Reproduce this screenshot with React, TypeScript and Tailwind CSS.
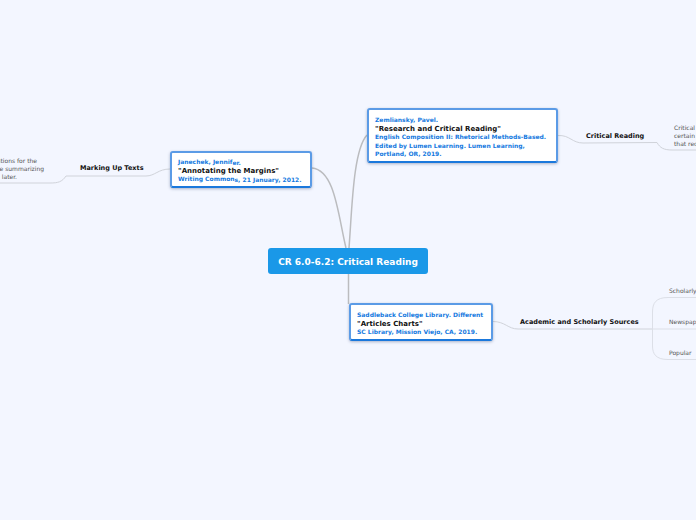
import React from 'react';

const font = { fontFamily: '"DejaVu Sans", sans-serif' };

const Blue: React.FC<{ children: React.ReactNode }> = ({ children }) => (
  <div className="text-[6px] font-bold leading-[8.500px] text-[#1479e0]">{children}</div>
);

const Title: React.FC<{ children: React.ReactNode }> = ({ children }) => (
  <div className="text-[7px] font-bold leading-[8.500px] text-[#111]">{children}</div>
);

const Cite: React.FC<{ className: string; children: React.ReactNode }> = ({ className, children }) => (
  <div className={`absolute flex flex-col whitespace-nowrap rounded-[3px] border-2 border-[#5b9be6] border-b-[#1a78dc] bg-white shadow-[0_1px_3px_rgba(60,80,120,0.4)] ${className}`}>
    {children}
  </div>
);

const Topic: React.FC<{ className: string; children: React.ReactNode }> = ({ className, children }) => (
  <div className={`absolute whitespace-nowrap text-[6.500px] font-bold leading-[9px] text-[#111] ${className}`}>{children}</div>
);

const Leaf: React.FC<{ className: string; children: React.ReactNode }> = ({ className, children }) => (
  <div className={`absolute whitespace-nowrap text-[6px] leading-[8px] text-[#555] ${className}`}>{children}</div>
);

export default function App() {
  return (
    <div className="relative h-[520px] w-[696px] overflow-hidden bg-[#f3f6ff]" style={font}>
      {/* connectors */}
      <svg className="absolute left-0 top-0" width="696" height="520" fill="none">
        <g stroke="#bbbcbf" strokeWidth="1.5">
          <path d="M346 248 C 338 215, 335 170, 312 168" />
          <path d="M349 248 C 352 210, 353 150, 367 135" />
          <path d="M348.500 274 L348.500 304" />
        </g>
        <g stroke="#d0d3da" strokeWidth="1">
          <path d="M558 135.500 C 570 135, 572 143, 583 143 L 657 142.500 C 660 148, 664 150, 672 150 L 696 150" />
          <path d="M170 169 C 158 169, 155 176, 146 176 L 66 176 C 62 182, 58 183, 50 183 L 0 183" />
          <path d="M493 321.500 C 505 321.500, 508 329, 518 329 L 653 329" />
        </g>
        <g stroke="#dcdfe7" strokeWidth="1">
          <path d="M653 329 L 696 329" />
          <path d="M668 297.500 C 656 297.500, 652.500 303, 652.500 312 L 652.500 346 C 652.500 354, 656 359.500, 668 359.500 L 696 359.500" />
          <path d="M668 297.500 L 696 297.500" />
        </g>
      </svg>

      {/* central topic */}
      <div className="absolute left-[268px] top-[248px] flex h-[26px] w-[160px] items-center justify-center rounded-[3px] bg-[#1a98e8] pt-[3px] text-[9px] font-bold text-white">
        CR 6.0-6.2: Critical Reading
      </div>

      {/* citations */}
      <Cite className="left-[367px] top-[108px] h-[55px] w-[191px] pl-[6px] pt-[6px]">
        <Blue>Zemliansky, Pavel.</Blue>
        <Title>"Research and Critical Reading"</Title>
        <Blue>English Composition II: Rhetorical Methods-Based.</Blue>
        <Blue>Edited by Lumen Learning. Lumen Learning,</Blue>
        <Blue>Portland, OR, 2019.</Blue>
      </Cite>
      <Cite className="left-[170px] top-[151px] h-[37px] w-[142px] pl-[6px] pt-[5px]">
        <Blue>Janechek, Jennif<span className="relative top-[1px]">er.</span></Blue>
        <Title>"Annotating the Margins"</Title>
        <Blue>Writing Common<span className="relative top-[1px]">s, 21 January, 2012.</span></Blue>
      </Cite>
      <Cite className="left-[349px] top-[303px] h-[38px] w-[144px] pl-[6px] pt-[6px]">
        <Blue>Saddleback College Library. Different</Blue>
        <Title>"Articles Charts"</Title>
        <Blue>SC Library, Mission Viejo, CA, 2019.</Blue>
      </Cite>

      {/* topics */}
      <Topic className="left-[586px] top-[132px]">Critical Reading</Topic>
      <Topic className="left-[80px] top-[164px]">Marking Up Texts</Topic>
      <Topic className="left-[520px] top-[318px]">Academic and Scholarly Sources</Topic>

      {/* leaf notes */}
      <Leaf className="left-[674px] top-[124px]">
        Critical Reading<br />certain questions<br />that require
      </Leaf>
      <Leaf className="right-[652px] top-[157px] flex flex-col items-end">
        <span className="pr-[7px]">questions for the</span>
        <span>while summarizing</span>
        <span className="pr-[27px]">them later.</span>
      </Leaf>
      <Leaf className="left-[669px] top-[287px]">Scholarly</Leaf>
      <Leaf className="left-[669px] top-[318px]">Newspapers</Leaf>
      <Leaf className="left-[669px] top-[349px]">Popular</Leaf>
    </div>
  );
}
